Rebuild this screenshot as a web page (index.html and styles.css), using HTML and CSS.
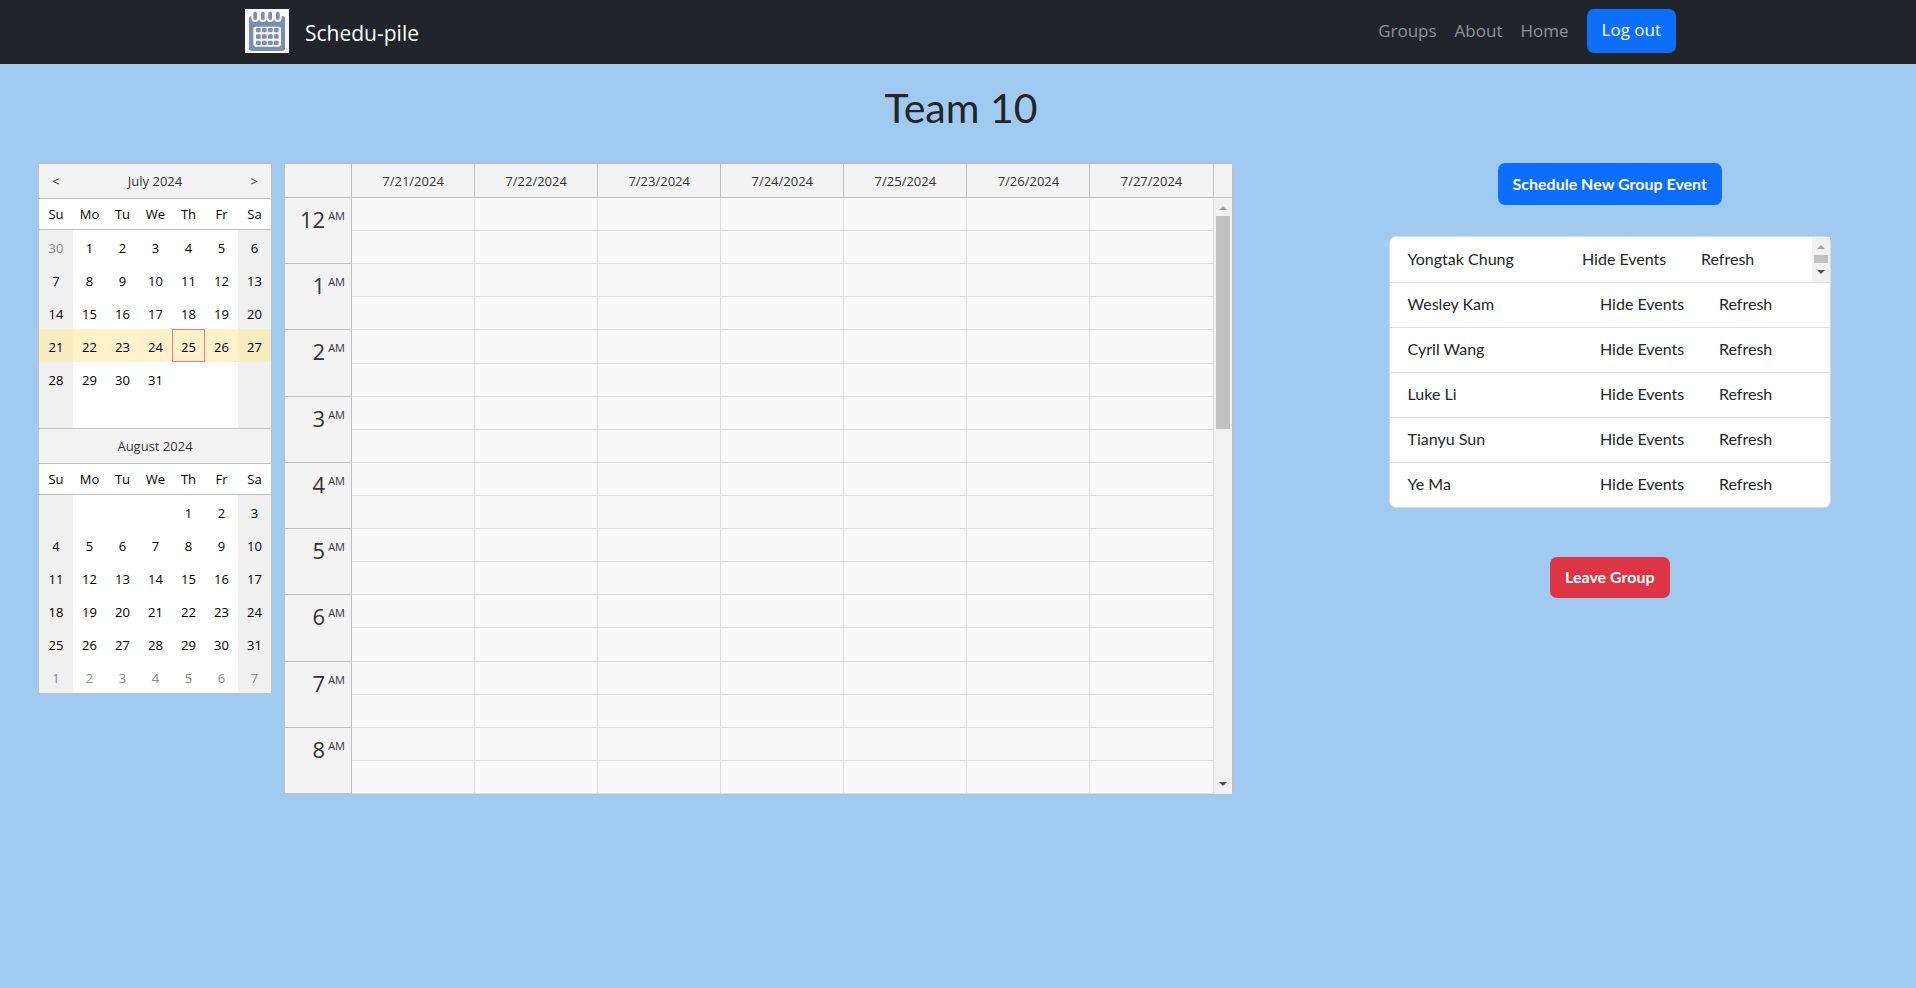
FILE: index.html
```html
<!DOCTYPE html>
<html lang="en">
<head>
<meta charset="utf-8">
<title>Schedu-pile</title>
<link rel="stylesheet" href="styles.css">
</head>
<body>
<header class="navbar">
  <a class="brand" href="#">
    <svg class="logo" viewBox="0 0 132 132" aria-hidden="true">
      <rect width="132" height="132" fill="#f7f8fa"/>
      <rect x="12" y="21" width="108" height="105" rx="8" fill="#7c8db0"/>
      <g fill="#7c8db0" stroke="#f7f8fa" stroke-width="6">
        <rect x="22" y="5" width="17" height="31" rx="8"/>
        <rect x="45" y="5" width="17" height="31" rx="8"/>
        <rect x="67" y="5" width="17" height="31" rx="8"/>
        <rect x="90" y="5" width="17" height="31" rx="8"/>
      </g>
      <rect x="25" y="53" width="83" height="60" rx="7" fill="#f7f8fa"/>
      <g fill="#7c8db0">
        <rect x="33" y="57" width="14" height="13" rx="3"/><rect x="51" y="57" width="14" height="13" rx="3"/><rect x="69" y="57" width="14" height="13" rx="3"/><rect x="87" y="57" width="14" height="13" rx="3"/>
        <rect x="33" y="76" width="14" height="13" rx="3"/><rect x="51" y="76" width="14" height="13" rx="3"/><rect x="69" y="76" width="14" height="13" rx="3"/><rect x="87" y="76" width="14" height="13" rx="3"/>
        <rect x="33" y="95" width="14" height="13" rx="3"/><rect x="51" y="95" width="14" height="13" rx="3"/><rect x="69" y="95" width="14" height="13" rx="3"/><rect x="87" y="95" width="14" height="13" rx="3"/>
      </g>
    </svg>
    <span>Schedu-pile</span>
  </a>
  <nav class="links">
    <a href="#">Groups</a>
    <a href="#">About</a>
    <a href="#">Home</a>
    <button class="btn logout" type="button">Log out</button>
  </nav>
</header>
<main>
  <h1>Team 10</h1>
  <div class="layout">
    <section class="scheduler">
      <div class="navigator">
        <div class="month-title"><button type="button" aria-label="Previous month">&lt;</button><span>July 2024</span><button type="button" aria-label="Next month">&gt;</button></div>
        <table class="month">
          <thead><tr><th class="edge">Su</th><th>Mo</th><th>Tu</th><th>We</th><th>Th</th><th>Fr</th><th>Sa</th></tr></thead>
          <tbody>
            <tr><td class="other">30</td><td>1</td><td>2</td><td>3</td><td>4</td><td>5</td><td>6</td></tr>
            <tr><td>7</td><td>8</td><td>9</td><td>10</td><td>11</td><td>12</td><td>13</td></tr>
            <tr><td>14</td><td>15</td><td>16</td><td>17</td><td>18</td><td>19</td><td>20</td></tr>
            <tr class="selected"><td>21</td><td>22</td><td>23</td><td>24</td><td class="today">25</td><td>26</td><td>27</td></tr>
            <tr><td>28</td><td>29</td><td>30</td><td>31</td><td></td><td></td><td></td></tr>
            <tr><td></td><td></td><td></td><td></td><td></td><td></td><td></td></tr>
          </tbody>
        </table>
        <div class="month-title next"><span>August 2024</span></div>
        <table class="month">
          <thead><tr><th class="edge">Su</th><th>Mo</th><th>Tu</th><th>We</th><th>Th</th><th>Fr</th><th>Sa</th></tr></thead>
          <tbody>
            <tr><td></td><td></td><td></td><td></td><td>1</td><td>2</td><td>3</td></tr>
            <tr><td>4</td><td>5</td><td>6</td><td>7</td><td>8</td><td>9</td><td>10</td></tr>
            <tr><td>11</td><td>12</td><td>13</td><td>14</td><td>15</td><td>16</td><td>17</td></tr>
            <tr><td>18</td><td>19</td><td>20</td><td>21</td><td>22</td><td>23</td><td>24</td></tr>
            <tr><td>25</td><td>26</td><td>27</td><td>28</td><td>29</td><td>30</td><td>31</td></tr>
            <tr class="others"><td>1</td><td>2</td><td>3</td><td>4</td><td>5</td><td>6</td><td>7</td></tr>
          </tbody>
        </table>
      </div>
      <div class="week">
        <table class="hours">
          <thead><tr><th class="corner"></th><th>7/21/2024</th><th>7/22/2024</th><th>7/23/2024</th><th>7/24/2024</th><th>7/25/2024</th><th>7/26/2024</th><th>7/27/2024</th></tr></thead>
          <tbody>
            <tr><th rowspan="2">12<sup>AM</sup></th><td></td><td></td><td></td><td></td><td></td><td></td><td></td></tr>
            <tr><td></td><td></td><td></td><td></td><td></td><td></td><td></td></tr>
            <tr><th rowspan="2">1<sup>AM</sup></th><td></td><td></td><td></td><td></td><td></td><td></td><td></td></tr>
            <tr><td></td><td></td><td></td><td></td><td></td><td></td><td></td></tr>
            <tr><th rowspan="2">2<sup>AM</sup></th><td></td><td></td><td></td><td></td><td></td><td></td><td></td></tr>
            <tr><td></td><td></td><td></td><td></td><td></td><td></td><td></td></tr>
            <tr><th rowspan="2">3<sup>AM</sup></th><td></td><td></td><td></td><td></td><td></td><td></td><td></td></tr>
            <tr><td></td><td></td><td></td><td></td><td></td><td></td><td></td></tr>
            <tr><th rowspan="2">4<sup>AM</sup></th><td></td><td></td><td></td><td></td><td></td><td></td><td></td></tr>
            <tr><td></td><td></td><td></td><td></td><td></td><td></td><td></td></tr>
            <tr><th rowspan="2">5<sup>AM</sup></th><td></td><td></td><td></td><td></td><td></td><td></td><td></td></tr>
            <tr><td></td><td></td><td></td><td></td><td></td><td></td><td></td></tr>
            <tr><th rowspan="2">6<sup>AM</sup></th><td></td><td></td><td></td><td></td><td></td><td></td><td></td></tr>
            <tr><td></td><td></td><td></td><td></td><td></td><td></td><td></td></tr>
            <tr><th rowspan="2">7<sup>AM</sup></th><td></td><td></td><td></td><td></td><td></td><td></td><td></td></tr>
            <tr><td></td><td></td><td></td><td></td><td></td><td></td><td></td></tr>
            <tr><th rowspan="2">8<sup>AM</sup></th><td></td><td></td><td></td><td></td><td></td><td></td><td></td></tr>
            <tr><td></td><td></td><td></td><td></td><td></td><td></td><td></td></tr>
          </tbody>
        </table>
        <div class="side">
          <div class="side-head"></div>
          <div class="scrollbar">
            <svg viewBox="0 0 8 4"><path d="M4 0L8 4H0z" fill="#a3a3a3"/></svg>
            <div class="track"><div class="thumb"></div></div>
            <svg viewBox="0 0 8 4"><path d="M0 0H8L4 4z" fill="#505050"/></svg>
          </div>
        </div>
      </div>
    </section>
    <aside class="members">
      <button class="btn" type="button">Schedule New Group Event</button>
      <ul class="list">
        <li>
          <div class="member"><span>Yongtak Chung</span><button type="button">Hide Events</button><button type="button">Refresh</button></div>
          <div class="scrollbar small">
            <svg viewBox="0 0 8 4"><path d="M4 0L8 4H0z" fill="#a3a3a3"/></svg>
            <div class="track"><div class="thumb"></div></div>
            <svg viewBox="0 0 8 4"><path d="M0 0H8L4 4z" fill="#505050"/></svg>
          </div>
        </li>
        <li><div class="member"><span>Wesley Kam</span><button type="button">Hide Events</button><button type="button">Refresh</button></div></li>
        <li><div class="member"><span>Cyril Wang</span><button type="button">Hide Events</button><button type="button">Refresh</button></div></li>
        <li><div class="member"><span>Luke Li</span><button type="button">Hide Events</button><button type="button">Refresh</button></div></li>
        <li><div class="member"><span>Tianyu Sun</span><button type="button">Hide Events</button><button type="button">Refresh</button></div></li>
        <li><div class="member"><span>Ye Ma</span><button type="button">Hide Events</button><button type="button">Refresh</button></div></li>
      </ul>
      <button class="btn danger" type="button">Leave Group</button>
    </aside>
  </div>
</main>
</body>
</html>
```
FILE: styles.css
```css
* { box-sizing: border-box; }
body {
  margin: 0;
  min-height: 100vh;
  background: #a0caf0;
  color: #212529;
  font-family: "Gill Sans", "Gill Sans MT", Lato, sans-serif;
  font-size: 16px;
}
button { font: inherit; color: inherit; background: none; border: 0; padding: 0; cursor: pointer; }
a { text-decoration: none; }
table { border-collapse: separate; border-spacing: 0; table-layout: fixed; width: 100%; }
th, td { padding: 0; font-weight: 400; }

.navbar {
  display: flex;
  justify-content: space-between;
  align-items: center;
  height: 64px;
  padding: 0 240px 2px 245px;
  background: #212529;
  font-family: "Segoe UI", "Open Sans", sans-serif;
}
.brand { display: flex; align-items: center; gap: 16px; color: #fff; font-size: 21px; }
.brand span { padding-top: 4px; }
.logo { width: 44px; height: 44px; }
.links { display: flex; align-items: center; gap: 18px; font-size: 17px; }
.links a { color: #909294; padding-bottom: 2px; }
.btn {
  padding: 0 15px 2px;
  height: 42px;
  border-radius: 7px;
  background: #0d6efd;
  color: #fff;
  font-weight: 700;
}
.links .logout { height: 44px; font-weight: 400; padding-bottom: 4px; }
.danger { background: #dc3545; height: 41px; }

h1 { margin: 16px 0 27px; text-align: center; font-size: 41px; font-weight: 400; line-height: 56px; padding-left: 6px; }

.layout { display: grid; grid-template-columns: 27fr 10fr; gap: 156px; padding: 0 85px 0 38px; align-items: start; }
.scheduler { display: flex; align-items: flex-start; gap: 12px; min-width: 0; font-family: "Segoe UI", "Open Sans", sans-serif; font-size: 13px; }

.navigator { flex: none; width: 234px; border: 1px solid #c0c0c0; background: #fff; }
.month-title {
  display: flex;
  justify-content: space-between;
  align-items: center;
  height: 35px;
  padding: 0 13px;
  background: #f3f3f3;
  border-bottom: 1px solid #c0c0c0;
  color: #333;
}
.month-title.next { justify-content: center; height: 36px; border-top: 1px solid #c0c0c0; }
.month { text-align: center; color: #000; }
.month th { height: 31px; border-bottom: 1px solid #c0c0c0; }
.month .edge { width: 34px; }
.month td { height: 33px; padding-top: 2px; }
.month td:first-child, .month td:last-child { background: #f0f0f0; }
.month .other, .month .others td { color: #888; }
.month .selected td { background: #fff2cb; }
.month .selected td:first-child, .month .selected td:last-child { background: #f8ecc0; }
.month .today { border: 1px solid #ff7777; }

.week { flex: 1; display: flex; min-width: 0; border: 1px solid #c0c0c0; }
.hours { flex: 1; height: 630px; background: #f9f9f9; color: #333; }
.hours thead th { height: 34px; background: #f3f3f3; border-right: 1px solid #c0c0c0; border-bottom: 1px solid #c0c0c0; }
.hours .corner { width: 67px; }
.hours td { border-right: 1px solid #ddd; border-bottom: 1px solid #ddd; }
.hours tbody th {
  padding: 5px 6px 0 0;
  background: #f3f3f3;
  border-right: 1px solid #c0c0c0;
  border-bottom: 1px solid #c0c0c0;
  text-align: right;
  vertical-align: top;
  font-size: 22px;
  line-height: 32px;
}
.hours sup { font-size: 11px; line-height: 11px; margin-left: 3px; vertical-align: 8px; }
.side { flex: none; width: 18px; display: flex; flex-direction: column; background: #f1f1f1; }
.side-head { height: 34px; border-bottom: 1px solid #c0c0c0; background: #f3f3f3; }

.scrollbar { flex: 1; display: flex; flex-direction: column; align-items: center; padding: 8px 0; background: #f1f1f1; }
.scrollbar svg { flex: none; width: 8px; height: 4px; }
.track { flex: 1; width: 14px; padding: 6px 0; }
.thumb { height: 38%; background: #c1c1c1; }

.members { display: flex; flex-direction: column; align-items: center; }
.list { width: 100%; margin: 31px 0 49px; padding: 0; list-style: none; background: #fff; border: 1px solid #d9dcdf; border-radius: 7px; }
.list li { display: flex; height: 45px; }
.list li + li { border-top: 1px solid #dfdfdf; }
.member { flex: 1; display: grid; grid-template-columns: 1fr 119px 94px; align-items: center; padding: 0 17px 3px 18px; }
.member button { text-align: left; }
.scrollbar.small { flex: none; width: 18px; }
.small .thumb { height: 8px; }
```
